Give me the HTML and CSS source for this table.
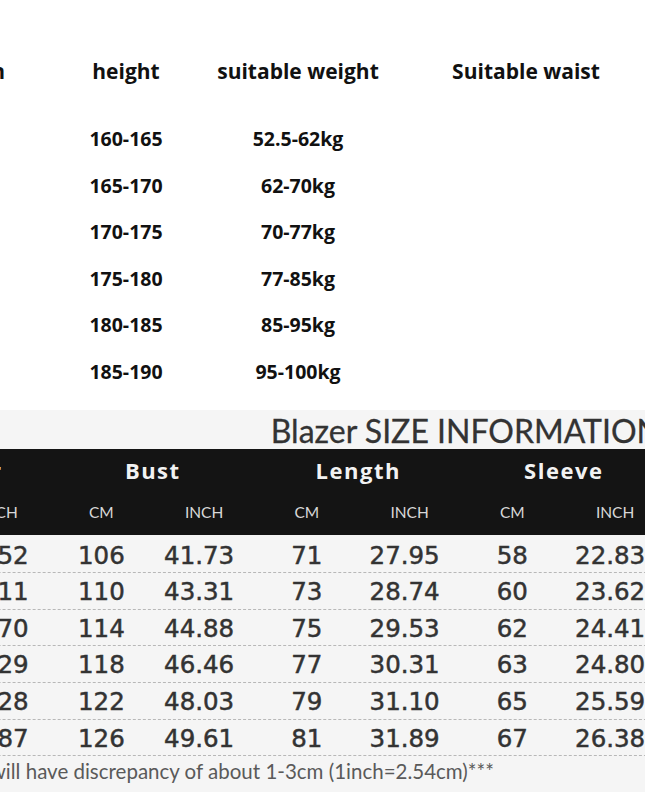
FILE: index.html
```html
<!DOCTYPE html>
<html lang="en">
<head>
<meta charset="utf-8">
<title>Blazer size chart</title>
<link rel="stylesheet" href="styles.css">
</head>
<body>
<section class="fit">
  <div class="fit-row fit-head">
    <div class="c0">Asian</div>
    <div>height</div>
    <div>suitable weight</div>
    <div>Suitable waist</div>
  </div>
  <div class="fit-body">
    <div class="fit-row"><div class="c0"></div><div>160-165</div><div>52.5-62kg</div><div></div></div>
    <div class="fit-row"><div class="c0"></div><div>165-170</div><div>62-70kg</div><div></div></div>
    <div class="fit-row"><div class="c0"></div><div>170-175</div><div>70-77kg</div><div></div></div>
    <div class="fit-row"><div class="c0"></div><div>175-180</div><div>77-85kg</div><div></div></div>
    <div class="fit-row"><div class="c0"></div><div>180-185</div><div>85-95kg</div><div></div></div>
    <div class="fit-row"><div class="c0"></div><div>185-190</div><div>95-100kg</div><div></div></div>
  </div>
</section>

<section class="chart">
  <div class="chart-inner">
    <h1 class="chart-title">Blazer SIZE INFORMATION</h1>
    <div class="band">
      <div class="groups">
        <div></div>
        <div>Shoulder</div>
        <div>Bust</div>
        <div>Length</div>
        <div>Sleeve</div>
      </div>
      <div class="units">
        <div></div>
        <div>CM</div><div>INCH</div>
        <div>CM</div><div>INCH</div>
        <div>CM</div><div>INCH</div>
        <div>CM</div><div>INCH</div>
      </div>
    </div>
    <div class="rows">
      <div class="row"><div></div><div></div><div class="in">17.52</div><div>106</div><div class="in">41.73</div><div>71</div><div class="in">27.95</div><div>58</div><div class="in">22.83</div></div>
      <div class="row"><div></div><div></div><div class="in">18.11</div><div>110</div><div class="in">43.31</div><div>73</div><div class="in">28.74</div><div>60</div><div class="in">23.62</div></div>
      <div class="row"><div></div><div></div><div class="in">18.70</div><div>114</div><div class="in">44.88</div><div>75</div><div class="in">29.53</div><div>62</div><div class="in">24.41</div></div>
      <div class="row"><div></div><div></div><div class="in">19.29</div><div>118</div><div class="in">46.46</div><div>77</div><div class="in">30.31</div><div>63</div><div class="in">24.80</div></div>
      <div class="row"><div></div><div></div><div class="in">20.28</div><div>122</div><div class="in">48.03</div><div>79</div><div class="in">31.10</div><div>65</div><div class="in">25.59</div></div>
      <div class="row"><div></div><div></div><div class="in">20.87</div><div>126</div><div class="in">49.61</div><div>81</div><div class="in">31.89</div><div>67</div><div class="in">26.38</div></div>
    </div>
    <p class="note">will have discrepancy of about 1-3cm (1inch=2.54cm)***</p>
  </div>
</section>
</body>
</html>
```

FILE: styles.css
```css
html, body {
  margin: 0;
  padding: 0;
  background: #ffffff;
  overflow: hidden;
}

body {
  width: 645px;
  height: 807px;
}

/* ---------- fit table ---------- */
.fit {
  padding-top: 48px;
  margin-left: -60px;
  font-family: "Open Sans", "Noto Sans", sans-serif;
  font-weight: 700;
  color: #111111;
}

.fit-row {
  display: grid;
  grid-template-columns: 100px 172px 172px 284px;
  text-align: center;
  white-space: nowrap;
}

.fit-head {
  height: 47px;
  line-height: 47px;
  font-size: 21px;
}

.fit-head .c0 {
  text-align: right;
  padding-right: 35px;
}

.fit-body {
  margin-top: 21px;
  font-size: 19.5px;
}

.fit-body .fit-row {
  height: 46.6px;
  line-height: 46.6px;
}

/* ---------- blazer chart ---------- */
.chart {
  margin-top: 14px;
  background: #f5f5f5;
  padding-bottom: 5px;
}

.chart-inner {
  width: 925px;
  margin-left: -258.25px;
}

.chart-title {
  margin: 0;
  height: 39px;
  line-height: 41px;
  padding-left: 529px;
  font-family: Lato, "Open Sans", sans-serif;
  font-weight: 400;
  font-size: 32px;
  color: #333333;
  -webkit-text-stroke: 0.3px #333333;
  white-space: nowrap;
}

.band {
  background: #141414;
  height: 86px;
}

.groups {
  display: grid;
  grid-template-columns: 102.75px repeat(4, 205.5px);
  height: 42px;
  line-height: 43px;
  text-align: center;
  font-family: "Open Sans", "Noto Sans", sans-serif;
  font-weight: 700;
  font-size: 22px;
  letter-spacing: 1.5px;
  color: #f2f2f2;
  white-space: nowrap;
}

.units {
  display: grid;
  grid-template-columns: repeat(9, 102.75px);
  height: 44px;
  line-height: 42px;
  text-align: center;
  font-family: Lato, "Open Sans", sans-serif;
  font-size: 15.5px;
  color: #d8d8d8;
}

.rows {
  padding-top: 2px;
  font-family: "DejaVu Sans", Verdana, sans-serif;
  font-size: 24.5px;
  color: #333333;
  -webkit-text-stroke: 0.5px #333333;
}

.row {
  display: grid;
  grid-template-columns: repeat(9, 102.75px);
  height: 35.6px;
  line-height: 38px;
  text-align: center;
  border-bottom: 1px dashed #b8b8b8;
  white-space: nowrap;
}

.row .in {
  padding-right: 10px;
}

.note {
  margin: 0;
  height: 31px;
  line-height: 31px;
  padding-left: 248px;
  font-family: Lato, "Open Sans", sans-serif;
  font-size: 20.5px;
  color: #5a5a5a;
  white-space: nowrap;
}
```
